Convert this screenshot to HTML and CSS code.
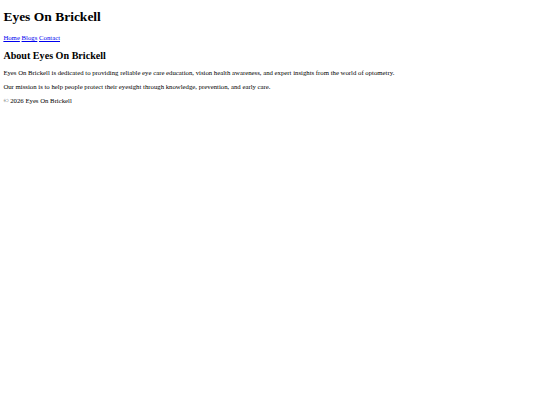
FILE: index.html
```html
<!DOCTYPE html>
<html>
<head>
<meta charset="utf-8">
<title>Eyes On Brickell</title>
<link rel="stylesheet" href="styles.css">
</head>
<body class="site">
<header class="site-header">
<h1 class="site-title">Eyes On Brickell</h1>
<nav class="site-nav"><a href="#">Home</a> <a href="#">Blogs</a> <a href="#">Contact</a></nav>
</header>
<main class="content">
<h2 class="section-title">About Eyes On Brickell</h2>
<p class="text">Eyes On Brickell is dedicated to providing reliable eye care education, vision health awareness, and expert insights from the world of optometry.</p>
<p class="text">Our mission is to help people protect their eyesight through knowledge, prevention, and early care.</p>
</main>
<footer class="site-footer">
<p class="text">© 2026 Eyes On Brickell</p>
</footer>
</body>
</html>
```
FILE: styles.css
```css
.site {
  margin: 3.375px;
  font-family: "Liberation Serif", "Times New Roman", serif;
  font-size: 6.75px;
  color: #000;
  background: #fff;
}
.site a {
  color: #0000ee;
}
.site-title {
  font-size: 13.5px;
  margin: 6px 0 9.05px;
}
.section-title {
  font-size: 10.125px;
  margin: 0.83em 0;
}
.text {
  margin: 1em 0;
}
```
